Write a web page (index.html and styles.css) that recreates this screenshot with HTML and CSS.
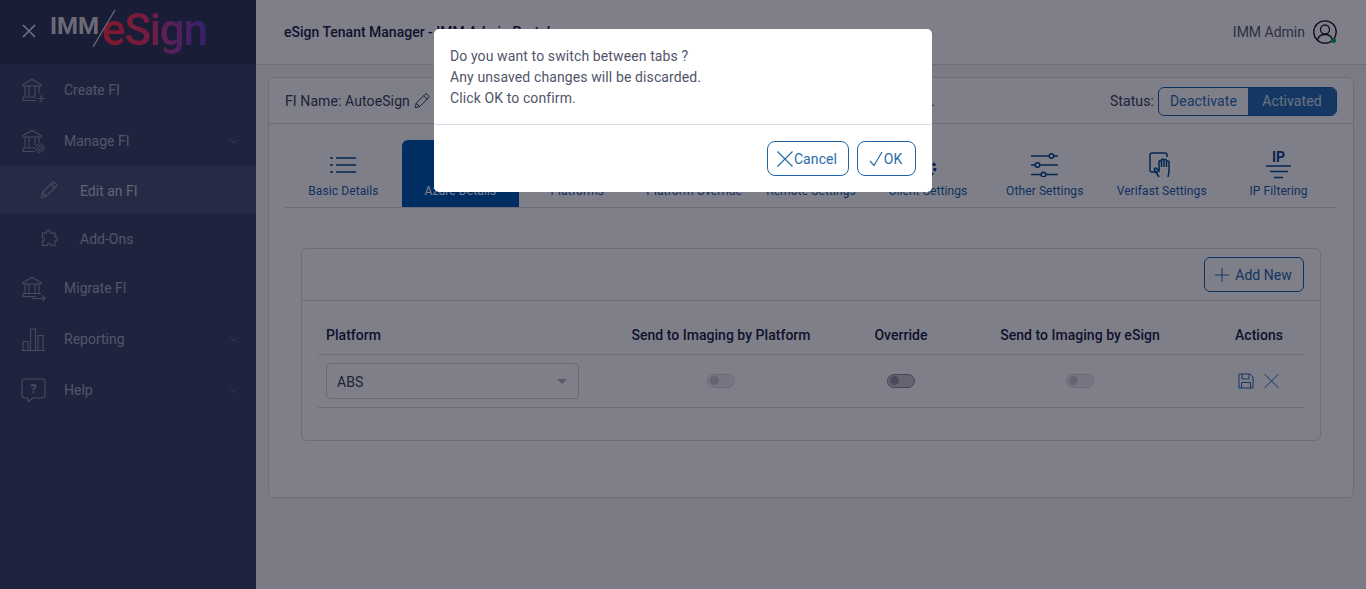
FILE: index.html
```html
<!DOCTYPE html>
<html>
<head>
  <title>eSign Tenant Manager</title>
  <link rel="stylesheet" href="styles.css">
</head>
<body>

  <!-- Sidebar -->
  <div class="sidebar">
    <div class="brand">
      <svg class="brand-close" width="16" height="16" viewBox="0 0 16 16"><path d="M2 2l12 12M14 2L2 14"/></svg>
      <span class="brand-imm">IMM</span>
      <svg class="brand-slash" width="24" height="40" viewBox="0 0 24 40"><path d="M23 1L1 38"/></svg>
      <span class="brand-esign">eSign</span>
    </div>

    <a class="nav-item">
      <svg class="nav-icon" width="26" height="26" viewBox="0 0 26 26"><path d="M3 7.500L12 2.500l9 5v1.500H3zM5 9v10M9 9v10M15 9v10M19 9v7M3 20h13M3 20v3.500h13M21 18v7M17.500 21.500h7"/></svg>
      <span>Create FI</span>
    </a>
    <a class="nav-item">
      <svg class="nav-icon" width="26" height="26" viewBox="0 0 26 26"><path d="M3 7.500L12 2.500l9 5v1.500H3zM5 9v10M9 9v10M15 9v8M19 9v6M3 20h12M3 20v3.500h12"/><circle cx="20" cy="20" r="2"/><circle cx="20" cy="20" r="4.200" stroke-dasharray="2 1.300"/></svg>
      <span>Manage FI</span>
      <svg class="nav-caret" width="10" height="6" viewBox="0 0 12 7"><path d="M1 1l5 5 5-5"/></svg>
    </a>
    <a class="nav-item nav-sub nav-current">
      <svg class="nav-icon" width="18" height="18" viewBox="0 0 18 18"><path d="M1.500 16.500l1-5L12.500 1.500a1.500 1.500 0 0 1 2.200 0l1.600 1.600a1.500 1.500 0 0 1 0 2.200L6.300 15.300zM2.500 11.500l4 4M11 3l4 4"/></svg>
      <span>Edit an FI</span>
    </a>
    <a class="nav-item nav-sub">
      <svg class="nav-icon" width="18" height="18" viewBox="0 0 18 18"><path d="M6.500 4C5.500 1 11 0 10.500 4H15V8C18 7 18 13 15 12V16.500H11C12 14 6 14 7 16.500H2.500V12C5 13 5 8 2.500 9V4z"/></svg>
      <span>Add-Ons</span>
    </a>
    <a class="nav-item">
      <svg class="nav-icon" width="26" height="26" viewBox="0 0 26 26"><path d="M3 7.500L12 2.500l9 5v1.500H3zM5 9v9M9 9v9M15 9v9M19 9v9M3 18.500h18M3 18.500v3h13M12 23.500h13M22 20.500l3 3-3 3"/></svg>
      <span>Migrate FI</span>
    </a>
    <a class="nav-item">
      <svg class="nav-icon" width="26" height="26" viewBox="0 0 26 26"><path d="M1 24.500h24M3 24.500v-9h5v9M10.500 24.500V3h5v21.500M18 24.500v-15h5v15"/></svg>
      <span>Reporting</span>
      <svg class="nav-caret" width="10" height="6" viewBox="0 0 12 7"><path d="M1 1l5 5 5-5"/></svg>
    </a>
    <a class="nav-item">
      <svg class="nav-icon" width="26" height="26" viewBox="0 0 26 26"><path d="M5 2h17a3 3 0 0 1 3 3v13a3 3 0 0 1-3 3h-9l-5 3.500V21H5a3 3 0 0 1-3-3V5a3 3 0 0 1 3-3z"/><text x="13.500" y="15.500" class="help-mark">?</text></svg>
      <span>Help</span>
      <svg class="nav-caret" width="10" height="6" viewBox="0 0 12 7"><path d="M1 1l5 5 5-5"/></svg>
    </a>
  </div>

  <!-- Main -->
  <div class="main">
    <div class="topbar">
      <div class="topbar-title">eSign Tenant Manager - IMM Admin Portal</div>
      <div class="topbar-user">
        <span>IMM Admin</span>
        <span class="user-icon">
          <svg width="24" height="24" viewBox="0 0 24 24"><circle cx="12" cy="12" r="11.200"/><circle cx="12" cy="9.500" r="4.500"/><path d="M4.500 20c1-4 4-5.500 7.500-5.500s6.500 1.500 7.500 5.500"/></svg>
          <i class="user-dot"></i>
        </span>
      </div>
    </div>

    <div class="content">
      <div class="card">
        <div class="card-head">
          <div class="fi-name">
            FI Name: AutoeSign
            <svg width="16" height="16" viewBox="0 0 18 18"><path d="M1.500 16.500l1-5L12.500 1.500a1.500 1.500 0 0 1 2.200 0l1.600 1.600a1.500 1.500 0 0 1 0 2.200L6.300 15.300zM2.500 11.500l4 4M11 3l4 4"/></svg>
          </div>
          <div class="fi-id">Tenant ID: 1042.</div>
          <div class="status">
            <span>Status:</span>
            <div class="status-toggle">
              <span class="status-btn">Deactivate</span>
              <span class="status-btn status-on">Activated</span>
            </div>
          </div>
        </div>

        <div class="tabs">
          <div class="tab">
            <div class="tab-icon"><svg width="26" height="16" viewBox="0 0 26 16"><path d="M6 1h20M6 8h20M6 15h20M0 1h3M0 8h3M0 15h3"/></svg></div>
            <span>Basic Details</span>
          </div>
          <div class="tab tab-active">
            <div class="tab-icon"><svg width="26" height="20" viewBox="0 0 26 20"><path d="M8 17h11a4 4 0 0 0 0-8 6 6 0 0 0-11-1 4.500 4.500 0 0 0 0 9z"/></svg></div>
            <span>Azure Details</span>
          </div>
          <div class="tab">
            <div class="tab-icon"><svg width="26" height="20" viewBox="0 0 26 20"><path d="M2 5h22M2 10h22M2 15h22"/></svg></div>
            <span>Platforms</span>
          </div>
          <div class="tab">
            <div class="tab-icon"><svg width="26" height="20" viewBox="0 0 26 20"><path d="M2 5h22M2 10h22M2 15h22"/></svg></div>
            <span>Platform Override</span>
          </div>
          <div class="tab">
            <div class="tab-icon"><svg width="26" height="20" viewBox="0 0 26 20"><path d="M2 5h22M2 10h22M2 15h22"/></svg></div>
            <span>Remote Settings</span>
          </div>
          <div class="tab">
            <div class="tab-icon"><svg width="26" height="24" viewBox="0 0 26 24"><circle cx="13" cy="15" r="3"/><circle cx="13" cy="15" r="7" stroke-width="3" stroke-dasharray="3 2.500"/></svg></div>
            <span>Client Settings</span>
          </div>
          <div class="tab">
            <div class="tab-icon"><svg width="27" height="24" viewBox="0 0 27 24"><path d="M0 3h18M23 3h4M0 12h4M9 12h18M0 21.500h10M15 21.500h12"/><circle cx="20.500" cy="3" r="2.300"/><circle cx="6.500" cy="12" r="2.300"/><circle cx="12.500" cy="21.500" r="2.300"/></svg></div>
            <span>Other Settings</span>
          </div>
          <div class="tab">
            <div class="tab-icon"><svg width="26" height="26" viewBox="0 0 26 26"><path d="M9 20H3a2 2 0 0 1-2-2V3a2 2 0 0 1 2-2h13a2 2 0 0 1 2 2v2"/><path d="M10 25l-4.500-7c-.8-1.300 1-2.500 2-1.400L10 19V9.500c0-1.500 2.500-1.500 2.500 0V15V8c0-1.500 2.500-1.500 2.500 0v7V8.500c0-1.500 2.500-1.500 2.500 0V15v-5c0-1.500 2.500-1.500 2.500 0v9c0 2-.6 3.500-1 6"/></svg></div>
            <span>Verifast Settings</span>
          </div>
          <div class="tab">
            <div class="tab-icon">
              <span class="ip-mark">IP</span>
              <svg width="26" height="14" viewBox="0 0 26 14"><path d="M0 1h25M4 6.500h18M8 12.500h9"/></svg>
            </div>
            <span>IP Filtering</span>
          </div>
        </div>

        <div class="panel">
          <div class="panel-head">
            <button class="add-btn">
              <svg width="16" height="16" viewBox="0 0 16 16"><path d="M8 1v14M1 8h14"/></svg>
              Add New
            </button>
          </div>
          <div class="panel-body">
            <div class="grid grid-head">
              <div>Platform</div>
              <div class="cell-mid">Send to Imaging by Platform</div>
              <div class="cell-mid">Override</div>
              <div class="cell-mid">Send to Imaging by eSign</div>
              <div class="cell-mid cell-actions">Actions</div>
            </div>
            <div class="grid grid-row">
              <div class="select-box"><span>ABS</span><i class="select-caret"></i></div>
              <div class="cell-mid"><span class="switch"></span></div>
              <div class="cell-mid"><span class="switch switch-dark"></span></div>
              <div class="cell-mid"><span class="switch"></span></div>
              <div class="cell-mid cell-actions action-icons">
                <svg width="16" height="16" viewBox="0 0 16 16"><path d="M1 1h11l3 3v11H1zM4 1v5h7V1M3.500 15V9.500h9V15"/></svg>
                <svg width="17" height="16" viewBox="0 0 16 16"><path d="M1 1l14 14M15 1L1 15"/></svg>
              </div>
            </div>
          </div>
        </div>
      </div>
    </div>
  </div>

  <!-- Confirm dialog -->
  <div class="overlay">
    <div class="dialog">
      <div class="dialog-body">
        <p>Do you want to switch between tabs ?</p>
        <p>Any unsaved changes will be discarded.</p>
        <p>Click OK to confirm.</p>
      </div>
      <div class="dialog-foot">
        <button class="dialog-btn">
          <svg width="16" height="16" viewBox="0 0 16 16"><path d="M.5 .5l15 15M15.500 .5L.5 15.500"/></svg>
          Cancel
        </button>
        <button class="dialog-btn">
          <svg width="14" height="16" viewBox="0 0 14 16"><path d="M1 10l4 4.500L13 1"/></svg>
          OK
        </button>
      </div>
    </div>
  </div>

</body>
</html>
```

FILE: styles.css
```css
* {
  box-sizing: border-box;
}
body {
  margin: 0;
  height: 589px;
  overflow: hidden;
  display: flex;
  font-family: Roboto, sans-serif;
  font-size: 14px;
  color: #3d4460;
  background: #f6f6f8;
}
svg {
  fill: none;
  stroke: currentColor;
  flex-shrink: 0;
}

/* sidebar */
.sidebar {
  width: 256px;
  height: 589px;
  flex-shrink: 0;
  background: #3e4868;
  color: #a4abc0;
}
.brand {
  height: 64px;
  background: #323a56;
  display: flex;
  align-items: flex-start;
  padding-left: 21px;
  position: relative;
}
.brand-close {
  margin-top: 23px;
  color: #e8e8ee;
  stroke-width: 1.500;
}
.brand-imm {
  margin: 9px 0 0 13px;
  font-size: 24px;
  font-weight: 700;
  line-height: 34px;
  color: #d6d6dc;
}
.brand-slash {
  position: absolute;
  left: 92px;
  top: 9px;
  color: #d6d6dc;
  stroke-width: 1.300;
}
.brand-esign {
  margin: 5px 0 0 3px;
  font-size: 44px;
  font-weight: 500;
  line-height: 50px;
  letter-spacing: -1.2px;
  background: linear-gradient(90deg, #ff3048 0%, #f03a68 40%, #b040a0 65%, #6a40c8 100%);
  -webkit-background-clip: text;
  background-clip: text;
  color: transparent;
}
.nav-item {
  height: 51px;
  display: flex;
  align-items: center;
  padding: 0 17px 0 20px;
  gap: 18px;
}
.nav-item > span {
  flex: 1;
}
.nav-sub {
  height: 48px;
  padding-left: 40px;
  gap: 22px;
}
.nav-sub > span {
  padding-top: 2px;
}
.nav-current {
  background: #4c5676;
  color: #c4c8d8;
}
.nav-icon {
  stroke-width: 1.100;
  color: #8f96ac;
}
.nav-caret {
  color: #767e96;
}
.help-mark {
  font-family: Roboto, sans-serif;
  font-size: 13px;
  font-weight: 700;
  text-anchor: middle;
  fill: #8f96ac;
  stroke: none;
}

/* main */
.main {
  flex: 1;
  min-width: 0;
}
.topbar {
  height: 65px;
  background: #fff;
  border-bottom: 1px solid #dcdce4;
  display: flex;
  align-items: center;
  justify-content: space-between;
  padding: 0 29px 0 28px;
}
.topbar-title {
  font-weight: 500;
  color: #1f2747;
}
.topbar-user {
  display: flex;
  align-items: center;
  gap: 8px;
  color: #5a6078;
}
.user-icon {
  position: relative;
  display: block;
  height: 24px;
  color: #1a1a2a;
}
.user-icon svg {
  stroke-width: 1.300;
}
.user-dot {
  position: absolute;
  right: 1px;
  bottom: 1px;
  width: 5px;
  height: 5px;
  border-radius: 50%;
  background: #18a050;
}
.content {
  padding: 12px;
}
.card {
  height: 421px;
  background: #fff;
  border: 1px solid #d8d8e0;
  border-radius: 6px;
}
.card-head {
  height: 46px;
  border-bottom: 1px solid #d8d8e0;
  display: flex;
  align-items: center;
  padding: 0 16px;
  letter-spacing: 0.1px;
}
.fi-name {
  display: flex;
  align-items: center;
  gap: 4px;
  color: #3d4460;
}
.fi-name svg {
  color: #1f2747;
}
.fi-id {
  margin-left: auto;
  margin-right: 175px;
}
.status {
  display: flex;
  align-items: center;
  gap: 4px;
}
.status-toggle {
  display: flex;
  height: 29px;
  width: 179px;
  border: 1px solid #1d64a8;
  border-radius: 6px;
  overflow: hidden;
  margin-top: 1px;
}
.status-btn {
  flex: 1;
  display: flex;
  align-items: center;
  justify-content: center;
  color: #286fb4;
}
.status-btn:first-child {
  flex: 0 0 89px;
}
.status-on {
  background: #286fb4;
  color: #d6e4f2;
}
.tabs {
  display: flex;
  margin: 16px 16px 0;
  height: 68px;
  border-bottom: 1px solid #d8d8e0;
}
.tab {
  flex: 1;
  height: 67px;
  display: flex;
  flex-direction: column;
  align-items: center;
  justify-content: flex-end;
  gap: 4px;
  padding-bottom: 9px;
  font-size: 12px;
  letter-spacing: 0.1px;
  color: #1d64a8;
}
.tab-icon {
  height: 30px;
  display: flex;
  flex-direction: column;
  align-items: center;
  justify-content: center;
  color: #0a4a8c;
}
.tab-icon svg {
  stroke-width: 1.500;
}
.tab-active {
  background: #005cb0;
  color: #fff;
  border-radius: 6px 6px 0 0;
}
.tab-active .tab-icon {
  color: #fff;
}
.ip-mark {
  font-size: 14px;
  font-weight: 700;
  line-height: 12px;
  margin-bottom: 2px;
  letter-spacing: 0;
}
.panel {
  margin: 40px 32px 0 32px;
  height: 193px;
  border: 1px solid #d8d8e0;
  border-radius: 6px;
}
.panel-head {
  height: 52px;
  border-bottom: 1px solid #d8d8e0;
  display: flex;
  align-items: center;
  justify-content: flex-end;
  padding-right: 16px;
}
.add-btn {
  height: 35px;
  width: 100px;
  border: 1px solid #1d64a8;
  border-radius: 6px;
  background: transparent;
  display: flex;
  align-items: center;
  justify-content: center;
  gap: 5px;
  padding: 0 2px 0 0;
  font: 14px Roboto, sans-serif;
  color: #2a6cac;
}
.panel-body {
  padding: 16px 16px 0;
}
.grid {
  display: grid;
  grid-template-columns: 286px 218px 142px 216px 116px;
  align-items: center;
  padding-left: 8px;
}
.grid-head {
  height: 38px;
  border-bottom: 1px solid #d8d8e0;
  font-weight: 500;
  letter-spacing: 0.03px;
  color: #1f2747;
  padding-bottom: 2px;
}
.grid-row {
  height: 53px;
  border-bottom: 1px solid #d8d8e0;
}
.cell-mid {
  display: flex;
  justify-content: center;
}
.cell-actions {
  padding-left: 26px;
}
.select-box {
  width: 253px;
  height: 36px;
  border: 1px solid #d0d0d8;
  border-radius: 4px;
  display: flex;
  align-items: center;
  justify-content: space-between;
  padding: 0 11px 0 10px;
  letter-spacing: 0.1px;
  color: #3d4460;
}
.select-box span {
  padding-top: 2px;
}
.select-caret {
  width: 0;
  height: 0;
  border-left: 5px solid transparent;
  border-right: 5px solid transparent;
  border-top: 5px solid #b0b0bc;
}
.switch {
  width: 28px;
  height: 14px;
  border-radius: 7px;
  background: #ececf0;
  border: 1px solid #d8d8de;
  display: block;
  position: relative;
}
.switch::before {
  content: "";
  position: absolute;
  left: 2px;
  top: 1px;
  width: 9px;
  height: 9px;
  border-radius: 50%;
  background: #c8c8d0;
}
.switch-dark {
  background: #c8c8d0;
  border-color: #8c8c9c;
}
.switch-dark::before {
  background: #9696a4;
}
.action-icons {
  gap: 9px;
  color: #2a6cac;
}

/* dialog */
.overlay {
  position: fixed;
  top: 0;
  left: 0;
  right: 0;
  bottom: 0;
  background: rgba(0, 0, 20, 0.5);
  display: flex;
  justify-content: center;
  align-items: flex-start;
  padding-top: 29px;
}
.dialog {
  width: 498px;
  height: 163px;
  background: #fff;
  border-radius: 5px;
}
.dialog-body {
  height: 96px;
  padding: 17px 16px 0;
  border-bottom: 1px solid #dcdce8;
  color: #50556a;
  line-height: 21px;
  letter-spacing: 0.11px;
}
.dialog-body p {
  margin: 0;
}
.dialog-foot {
  display: flex;
  justify-content: flex-end;
  gap: 8px;
  padding: 16px 16px 0;
}
.dialog-btn {
  height: 35px;
  border: 1px solid #1d64a8;
  border-radius: 8px;
  background: #fff;
  display: flex;
  align-items: center;
  justify-content: center;
  gap: 1px;
  padding: 0 2px 0 0;
  font: 14px Roboto, sans-serif;
  letter-spacing: 0.1px;
  color: #2a6cac;
  width: 82px;
}
.dialog-btn svg {
  stroke-width: 1.200;
}
.dialog-btn + .dialog-btn {
  width: 59px;
}
```
